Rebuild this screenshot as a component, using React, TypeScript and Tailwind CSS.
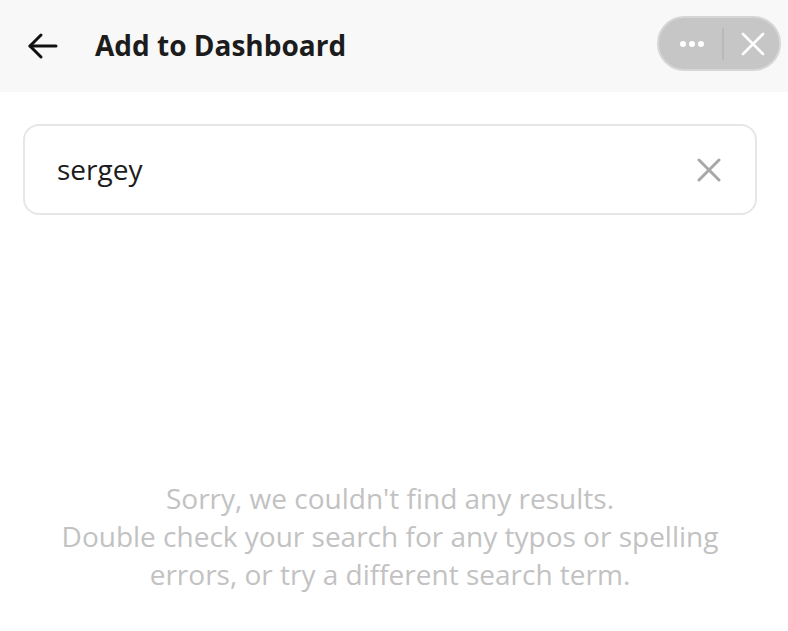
const App = () => {
  return (
    <div
      className="flex h-[631px] w-[788px] flex-col bg-white"
      style={{ fontFamily: '"Open Sans", "Noto Sans", sans-serif' }}
    >
      {/* Header */}
      <div className="relative flex h-[92px] items-center bg-[#f8f8f8]">
        <div className="ml-[27px] flex h-8 w-8 items-center justify-center">
          <svg width="32" height="32" viewBox="0 0 32 32" fill="none" stroke="#111" strokeWidth="3" strokeLinecap="round" strokeLinejoin="round">
            <path d="M29 16H3" />
            <path d="M14 5L3 16l11 11" />
          </svg>
        </div>
        <h1 className="ml-[36px] -mt-[2px] text-[28px] font-bold text-[#1c1c1c]">Add to Dashboard</h1>

        {/* Capsule */}
        <div className="absolute right-[7px] top-[16px] flex h-[55px] w-[124px] items-center rounded-full border-2 border-[#d6d6d6] bg-[#c6c6c6]">
          <div className="flex w-[63px] items-center justify-center gap-[3px] pl-[2px]">
            <span className="h-[6px] w-[6px] rounded-full bg-white" />
            <span className="h-[6px] w-[6px] rounded-full bg-white" />
            <span className="h-[6px] w-[6px] rounded-full bg-white" />
          </div>
          <div className="h-[32px] w-[2px] bg-[#b9b9b9]" />
          <div className="flex flex-1 items-center justify-center pl-[2px]">
            <svg width="26" height="26" viewBox="0 0 26 26" stroke="#fff" strokeWidth="2.6" strokeLinecap="round">
              <path d="M3 3l20 20M23 3L3 23" />
            </svg>
          </div>
        </div>
      </div>

      {/* Search */}
      <div className="pl-[23px] pr-[31px] pt-[32px]">
        <div className="flex h-[91px] items-center rounded-[16px] border-2 border-[#e6e6e8] bg-white pl-[32px] pr-[34px]">
          <span className="-mt-[2px] flex-1 text-[28px] text-[#1c1c1c]">sergey</span>
          <svg width="24" height="24" viewBox="0 0 24 24" stroke="#a8a8a8" strokeWidth="3" strokeLinecap="round">
            <path d="M2 2l20 20M22 2L2 22" />
          </svg>
        </div>
      </div>

      {/* Empty state */}
      <div className="mt-[264px] pl-[46px] pr-[54px] text-center text-[28px] leading-[38px] text-[#c2c2c2]">
        <p>Sorry, we couldn't find any results.</p>
        <p>Double check your search for any typos or spelling errors, or try a different search term.</p>
      </div>
    </div>
  );
};

export default App;
